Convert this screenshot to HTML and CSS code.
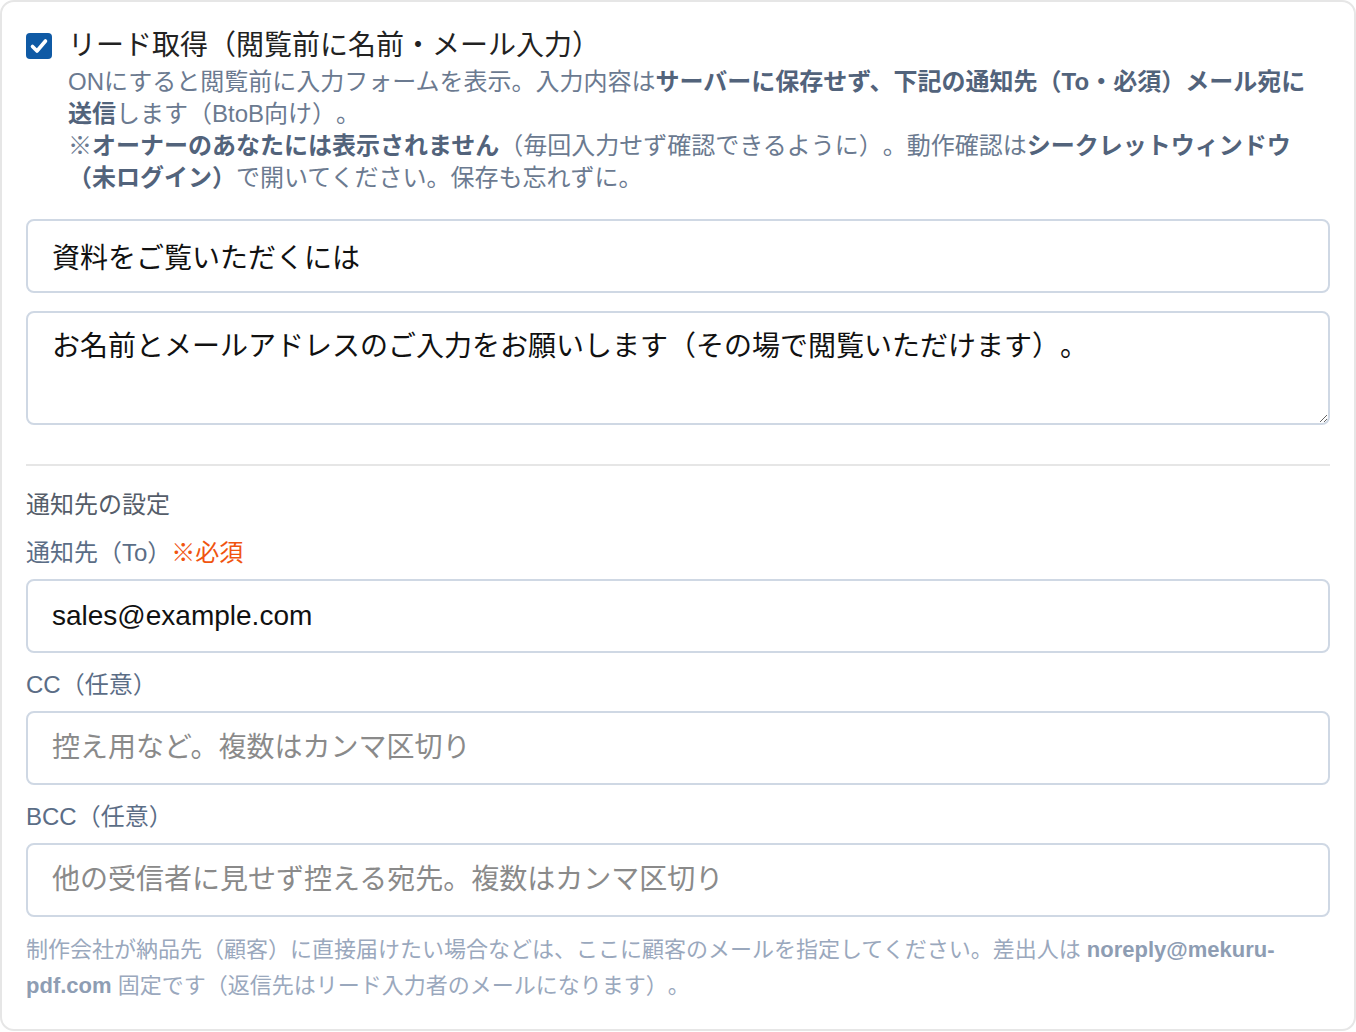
FILE: index.html
```html
<!DOCTYPE html>
<html lang="ja">
<head>
    <meta charset="UTF-8">
    <meta name="viewport" content="width=device-width, initial-scale=1.0">
    <title>リード取得設定</title>
    <link rel="stylesheet" href="styles.css">
</head>
<body>
    <div class="card">
        <!-- リード取得のON/OFF -->
        <label class="lead-toggle">
            <span class="check">
                <svg width="26" height="26" viewBox="0 0 26 26">
                    <rect x="0" y="0" width="26" height="26" rx="4" fill="#0f5aa5"/>
                    <path d="M6.5 13.5 L11 18 L19.5 8" fill="none" stroke="#fff" stroke-width="3.6" stroke-linecap="round" stroke-linejoin="round"/>
                </svg>
            </span>
            <span class="lead-text">
                <span class="lead-title">リード取得（閲覧前に名前・メール入力）</span>
                <span class="lead-desc">ONにすると閲覧前に入力フォームを表示。入力内容は<strong>サーバーに保存せず、下記の通知先（To・必須）メール宛に送信</strong>します（BtoB向け）。<br>※<strong>オーナーのあなたには表示されません</strong>（毎回入力せず確認できるように）。動作確認は<strong>シークレットウィンドウ（未ログイン）</strong>で開いてください。保存も忘れずに。</span>
            </span>
        </label>

        <!-- フォームの見出しと説明 -->
        <div class="lead-fields">
            <input class="field" type="text" value="資料をご覧いただくには">
            <textarea class="field field-area">お名前とメールアドレスのご入力をお願いします（その場で閲覧いただけます）。</textarea>
        </div>

        <hr class="divider">

        <!-- 通知先 -->
        <div class="section-title">通知先の設定</div>

        <div class="field-label">通知先（To）<span class="required">※必須</span></div>
        <input class="field" type="email" value="sales@example.com">

        <div class="field-label">CC（任意）</div>
        <input class="field" type="text" placeholder="控え用など。複数はカンマ区切り">

        <div class="field-label">BCC（任意）</div>
        <input class="field" type="text" placeholder="他の受信者に見せず控える宛先。複数はカンマ区切り">

        <p class="note">制作会社が納品先（顧客）に直接届けたい場合などは、ここに顧客のメールを指定してください。差出人は <strong>noreply@mekuru-pdf.com</strong> 固定です（返信先はリード入力者のメールになります）。</p>
    </div>
</body>
</html>
```

FILE: styles.css
```css
/* 全体 */
body {
    margin: 0;
    background: #fff;
    font-family: "Liberation Sans", "Noto Sans CJK JP", sans-serif;
    text-spacing-trim: space-all; /* 約物を詰めない */
}

.card {
    border: 2px solid #e6e6e6;
    border-radius: 14px;
    padding: 24px 24px 25px;
    background: #fff;
}

/* リード取得 */
.lead-toggle {
    display: flex;
    gap: 16px;
    align-items: flex-start;
    cursor: pointer;
}

.check {
    display: block;
    width: 26px;
    height: 26px;
    margin-top: 7px;
    flex-shrink: 0;
}

.check svg {
    display: block;
}

.lead-text {
    display: block;
    flex: 1;
}

.lead-title {
    display: block;
    font-size: 28px;
    line-height: 40px;
    color: #222;
}

.lead-desc {
    display: block;
    max-width: 1250px;
    font-size: 24px;
    line-height: 32px;
    color: #6b7a90;
}

.lead-desc strong {
    color: #52637b;
}

/* 入力欄 */
.lead-fields {
    margin-top: 25px;
}

.field {
    display: block;
    width: 100%;
    box-sizing: border-box;
    height: 74px;
    padding: 0 24px;
    margin: 0;
    font-family: "Liberation Sans", "Noto Sans CJK JP", sans-serif;
    font-size: 28px;
    color: #111;
    background: #fff;
    border: 2px solid #cfd8e4;
    border-radius: 8px;
    outline: none;
    text-spacing-trim: space-all;
}

.field::placeholder {
    color: #8a8a8a;
}

.field-area {
    height: 114px;
    margin-top: 18px;
    padding: 14px 24px;
    line-height: 40px;
    resize: vertical;
}

.divider {
    border: none;
    height: 2px;
    background: #e6e6e6;
    margin: 39px 0 23px;
}

/* 通知先 */
.section-title {
    font-size: 24px;
    line-height: 32px;
    color: #555d69;
    margin-bottom: 16px;
}

.field-label {
    font-size: 24px;
    line-height: 32px;
    color: #5b6d86;
    margin: 16px 0 10px;
}

.section-title + .field-label {
    margin-top: 0;
}

.required {
    color: #f0540f;
}

.note {
    margin: 15px 0 0;
    font-size: 22px;
    line-height: 36px;
    color: #9aa8bd;
}

.note strong {
    color: #8e9db3;
}
```
